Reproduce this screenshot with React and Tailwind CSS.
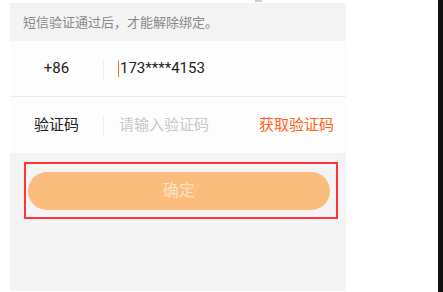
import React from "react";

const font = { fontFamily: '"Roboto", "Noto Sans CJK SC", sans-serif' };

function App() {
  return (
    <div className="w-[443px] h-[292px] bg-white flex overflow-hidden" style={font}>
      {/* PHONE PANEL */}
      <div className="ml-[10px] w-[336px] h-[291px] flex flex-col">
        <div className="h-[3px] bg-white relative">
          <div className="absolute left-[245px] top-0 w-[7px] h-[2px] bg-[#d0d0d0]" />
        </div>

        {/* HINT */}
        <div className="h-[38px] bg-[#f3f3f3] flex items-center pl-[13px] pt-[2px] text-[13px] text-[#8a8a8a]">
          短信验证通过后，才能解除绑定。
        </div>

        {/* PHONE ROW */}
        <div className="h-[56px] bg-[#fdfdfd] flex items-center border-b border-[#ececec]">
          <div className="w-[93px] text-center text-[15px] text-[#222]">+86</div>
          <div className="w-px h-[20px] bg-[#f0f0f0]" />
          <div className="ml-[14px] flex items-center text-[15px] text-[#222]">
            <span className="w-px h-[16px] bg-[#ff6d2e] mr-px" />
            173****4153
          </div>
        </div>

        {/* CODE ROW */}
        <div className="h-[56px] bg-[#fdfdfd] flex items-center text-[15px]">
          <div className="w-[93px] text-center text-[#222]">验证码</div>
          <div className="w-px h-[20px] bg-[#f0f0f0]" />
          <div className="ml-[15px] flex-1 text-[#c8c8c8]">请输入验证码</div>
          <div className="mr-[12px] text-[#ff6418]">获取验证码</div>
        </div>

        {/* BUTTON AREA */}
        <div className="flex-1 bg-[#f4f4f4] pt-[9px] pl-[14px]">
          <div className="w-[314px] h-[57px] border-2 border-[#ff3535] pl-[2px] pt-[8px]">
            <button className="w-[302px] h-[38px] rounded-full bg-[#fbbd7c] text-[#fde2c6] text-[16px]">
              确定
            </button>
          </div>
        </div>
      </div>

      <div className="flex-1" />
      <div className="w-[5px] h-full bg-[#111]" />
    </div>
  );
}

export default App;
